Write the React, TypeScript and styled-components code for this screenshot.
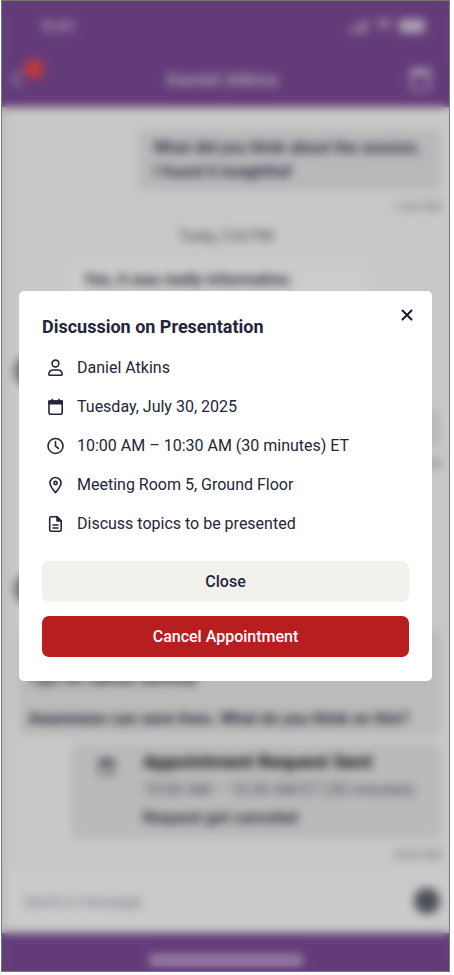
import React from "react";
import styled, { createGlobalStyle } from "styled-components";

const Global = createGlobalStyle`
  * { box-sizing: border-box; }
  body { margin: 0; background: #fff; font-family: Roboto, "Liberation Sans", sans-serif; color: #23263a; }
  button, input { font: inherit; }
  h1, h2, h3, p, ul { margin: 0; padding: 0; }
`;

const Page = styled.div`
  min-height: 100vh;
  display: flex;
  padding: 0 4px 3px 1px;
`;

const Phone = styled.div`
  position: relative;
  flex: 1;
  display: flex;
  flex-direction: column;
  overflow: hidden;
  background: #fbfbf8;
  border: 1px solid #777;
`;

const StatusBar = styled.div`
  display: flex;
  justify-content: space-between;
  align-items: center;
  height: 50px;
  padding: 0 24px 0 40px;
  background: #7c4a98;
  color: #d8cbe0;
  font-size: 17px;
  font-weight: 600;
`;

const StatusIcons = styled.div`
  display: flex;
  gap: 6px;
  align-items: center;
`;

const Header = styled.header`
  display: grid;
  grid-template-columns: 1fr auto 1fr;
  align-items: center;
  height: 56px;
  padding: 0 14px 0 8px;
  background: #7c4a98;
  color: #d8cbe0;
`;

const HeaderTitle = styled.h1`
  font-size: 19px;
  font-weight: 600;
`;

const HeaderButton = styled.button<{ $end?: boolean }>`
  position: relative;
  display: flex;
  justify-self: ${(p) => (p.$end ? "end" : "start")};
  padding: 0;
  border: 0;
  background: none;
  color: inherit;
`;

const UnreadBadge = styled.span`
  position: absolute;
  top: -10px;
  left: 14px;
  width: 20px;
  height: 20px;
  border-radius: 50%;
  background: #f5484c;
`;

const Messages = styled.main`
  flex: 1;
  display: flex;
  flex-direction: column;
  padding: 22px 8px 4px;
`;

const Bubble = styled.div`
  align-self: flex-end;
  padding: 7px 21px 7px 16px;
  border-radius: 8px;
  background: #e7e8ea;
  font-size: 16px;
  font-weight: 500;
  line-height: 24px;
`;

const Reply = styled(Bubble)<{ $height: number }>`
  width: 300px;
  min-height: ${(p) => p.$height}px;
  background: #fff;
`;

const SideBubble = styled(Bubble)`
  width: 240px;
  height: 38px;
`;

const Stamp = styled.time`
  align-self: flex-end;
  padding-top: 8px;
  font-size: 13px;
  line-height: 16px;
  color: #85868b;
`;

const DayLabel = styled.p`
  padding: 11px 0 15px;
  text-align: center;
  font-size: 14px;
  line-height: 20px;
  color: #55565c;
`;

const Incoming = styled.div<{ $before?: number }>`
  display: flex;
  align-items: flex-end;
  gap: 22px;
  margin-top: ${(p) => p.$before ?? 0}px;
  margin-bottom: 15px;
`;

const Avatar = styled.span`
  width: 32px;
  height: 32px;
  margin: 0 0 8px 4px;
  border-radius: 50%;
  background: #8c8c88;
`;

const Post = styled.div`
  display: flex;
  flex-direction: column;
  justify-content: flex-end;
  margin: 0 0 0 8px;
  height: 108px;
  padding: 5px 10px;
  border-radius: 8px;
  background: #ebeaea;
  font-size: 16px;
  font-weight: 600;
  line-height: 24px;
  gap: 16px;
`;

const Request = styled.div`
  display: flex;
  align-self: flex-end;
  align-items: flex-start;
  gap: 26px;
  width: 370px;
  margin-top: 7px;
  padding: 5px 16px 7px 26px;
  border-radius: 8px;
  background: #e9e9e9;
  font-size: 16px;
  line-height: 28px;
  white-space: nowrap;
`;

const RequestIcon = styled.span`
  display: flex;
  padding-top: 9px;
`;

const RequestTitle = styled.h3`
  color: #111;
  font-size: 19px;
  font-weight: 700;
  line-height: 28px;
`;

const RequestTime = styled.p`
  color: #5d5f70;
`;

const RequestStatus = styled.p`
  font-weight: 500;
`;

const Composer = styled.form`
  display: flex;
  align-items: center;
  gap: 16px;
  height: 64px;
  padding: 0 9px 0 20px;
  background: #fdfdfd;
`;

const MessageInput = styled.input`
  flex: 1;
  min-width: 0;
  border: 0;
  background: none;
  color: #23263a;
  font-size: 16px;
  &::placeholder { color: #a3a5ae; opacity: 1; }
`;

const SendButton = styled.button`
  width: 26px;
  height: 26px;
  padding: 0;
  border: 0;
  border-radius: 50%;
  background: #62656f;
`;

const HomeBar = styled.div`
  display: flex;
  justify-content: center;
  align-items: center;
  height: 38px;
  padding-top: 16px;
  background: #7c4a98;
  &::after {
    content: "";
    width: 156px;
    height: 12px;
    border-radius: 6px;
    background: #c0a0cf;
  }
`;

const Scrim = styled.div`
  position: absolute;
  inset: 0;
  display: grid;
  align-items: center;
  padding: 0 17px;
  background: rgba(0, 0, 0, 0.2);
  backdrop-filter: blur(5px);
`;

const Dialog = styled.section`
  position: relative;
  padding: 24px 23px;
  border-radius: 5px;
  background: #fff;
`;

const DialogTitle = styled.h2`
  font-size: 18px;
  font-weight: 700;
  line-height: 24px;
`;

const Dismiss = styled.button`
  position: absolute;
  top: 14px;
  right: 15px;
  display: flex;
  padding: 0;
  border: 0;
  background: none;
  color: #16192c;
`;

const Details = styled.ul`
  display: grid;
  gap: 15px;
  margin: 17px 0 25px;
  list-style: none;
`;

const Detail = styled.li`
  display: flex;
  align-items: center;
  gap: 11px;
  padding-left: 4px;
  font-size: 16px;
  line-height: 24px;
  svg { flex: none; }
`;

const Actions = styled.div`
  display: grid;
  gap: 14px;
`;

const Action = styled.button<{ $danger?: boolean }>`
  height: 41px;
  border: 0;
  border-radius: 7px;
  background: ${(p) => (p.$danger ? "#b71e20" : "#f3f1eb")};
  color: ${(p) => (p.$danger ? "#fff" : "#23263a")};
  font-size: 16px;
  font-weight: 500;
`;

const Icon = ({ children, size = 20 }: { children: React.ReactNode; size?: number }) => (
  <svg width={size} height={size} viewBox="0 0 20 20" fill="none" stroke="currentColor" strokeWidth="1.6" strokeLinecap="round" strokeLinejoin="round" aria-hidden="true">
    {children}
  </svg>
);

const PersonIcon = () => (
  <Icon>
    <circle cx="9.500" cy="5.500" r="3.400" />
    <path d="M2.900 16.400C2.900 13.600 4.800 12 7.300 12H11.700C14.200 12 16.100 13.600 16.100 16.400Q16.100 17.300 15.200 17.300H3.800Q2.900 17.300 2.900 16.400Z" />
  </Icon>
);
const CalendarIcon = ({ size }: { size?: number }) => (
  <Icon size={size}>
    <rect x="3" y="4" width="13.200" height="13.200" rx="1.200" />
    <path d="M3 4H16.200V6.800H3Z" fill="currentColor" />
    <path d="M6.300 2.400V5M12.900 2.400V5" />
  </Icon>
);
const ClockIcon = () => (
  <Icon>
    <circle cx="9.500" cy="10" r="7.500" />
    <path d="M9.500 5.600V10.200L12.500 12.500" />
  </Icon>
);
const PinIcon = () => (
  <Icon>
    <path d="M9.500 17.600C7 14.800 4 11.400 4 8A5.500 5.500 0 0 1 15 8C15 11.400 12 14.800 9.500 17.600Z" />
    <circle cx="9.500" cy="8" r="1.600" />
  </Icon>
);
const FileIcon = () => (
  <Icon>
    <path d="M5 2.700H11L15.200 7V16Q15.200 17.300 13.900 17.300H5Q3.700 17.300 3.700 16V4Q3.700 2.700 5 2.700Z" />
    <path d="M11 2.700V7H15.200Z" fill="currentColor" />
    <path d="M7 11H12M7 14H12" />
  </Icon>
);

const details = [
  { icon: <PersonIcon />, text: "Daniel Atkins" },
  { icon: <CalendarIcon />, text: "Tuesday, July 30, 2025" },
  { icon: <ClockIcon />, text: "10:00 AM – 10:30 AM (30 minutes) ET" },
  { icon: <PinIcon />, text: "Meeting Room 5, Ground Floor" },
  { icon: <FileIcon />, text: "Discuss topics to be presented" },
];

export default function App() {
  return (
    <>
      <Global />
      <Page>
        <Phone>
          <StatusBar>
            <span>9:41</span>
            <StatusIcons>
              <svg width="20" height="14" viewBox="0 0 20 14" fill="currentColor"><path d="M0 10h3v4H0zM5 7h3v7H5zM10 4h3v10h-3zM15 0h3v14h-3z" /></svg>
              <svg width="18" height="14" viewBox="0 0 20 14" fill="none" stroke="currentColor" strokeWidth="3"><path d="M1 4Q10-2 19 4M5 8Q10 4 15 8M9 12h2" /></svg>
              <svg width="26" height="14" viewBox="0 0 26 14" fill="currentColor"><rect width="26" height="14" rx="4" /></svg>
            </StatusIcons>
          </StatusBar>
          <Header>
            <HeaderButton aria-label="Back">
              <svg width="14" height="20" viewBox="0 0 14 20" fill="none" stroke="currentColor" strokeWidth="2"><path d="M11 2L3 10L11 18" /></svg>
              <UnreadBadge />
            </HeaderButton>
            <HeaderTitle>Daniel Atkins</HeaderTitle>
            <HeaderButton $end aria-label="Calendar"><CalendarIcon size={28} /></HeaderButton>
          </Header>
          <Messages>
            <Bubble>What did you think about the session,<br />I found it insightful!</Bubble>
            <Stamp>1:54 PM</Stamp>
            <DayLabel>Today, 2:03 PM</DayLabel>
            <Incoming>
              <Avatar />
              <Reply $height={134}>Yes, it was really informative.</Reply>
            </Incoming>
            <SideBubble />
            <Stamp>2:12 PM</Stamp>
            <Incoming $before={31}>
              <Avatar />
              <Reply $height={110} />
            </Incoming>
            <Post>
              <p>Tips for cancer survival</p>
              <p>Awareness can save lives. What do you think on this?</p>
            </Post>
            <Request>
              <RequestIcon><CalendarIcon /></RequestIcon>
              <div>
                <RequestTitle>Appointment Request Sent</RequestTitle>
                <RequestTime>10:00 AM – 10:30 AM ET (30 minutes)</RequestTime>
                <RequestStatus>Request got canceled</RequestStatus>
              </div>
            </Request>
            <Stamp>3:54 PM</Stamp>
          </Messages>
          <Composer onSubmit={(e) => e.preventDefault()}>
            <MessageInput aria-label="Message" placeholder="Send a message" />
            <SendButton aria-label="Send" />
          </Composer>
          <HomeBar />
          <Scrim>
            <Dialog role="dialog" aria-modal="true" aria-labelledby="dialog-title">
              <DialogTitle id="dialog-title">Discussion on Presentation</DialogTitle>
              <Dismiss aria-label="Dismiss">
                <svg width="20" height="20" viewBox="0 0 20 20" fill="none" stroke="currentColor" strokeWidth="2" strokeLinecap="round"><path d="M5.500 5.500L14.500 14.500M14.500 5.500L5.500 14.500" /></svg>
              </Dismiss>
              <Details>
                {details.map((d) => (
                  <Detail key={d.text}>{d.icon}<span>{d.text}</span></Detail>
                ))}
              </Details>
              <Actions>
                <Action>Close</Action>
                <Action $danger>Cancel Appointment</Action>
              </Actions>
            </Dialog>
          </Scrim>
        </Phone>
      </Page>
    </>
  );
}
